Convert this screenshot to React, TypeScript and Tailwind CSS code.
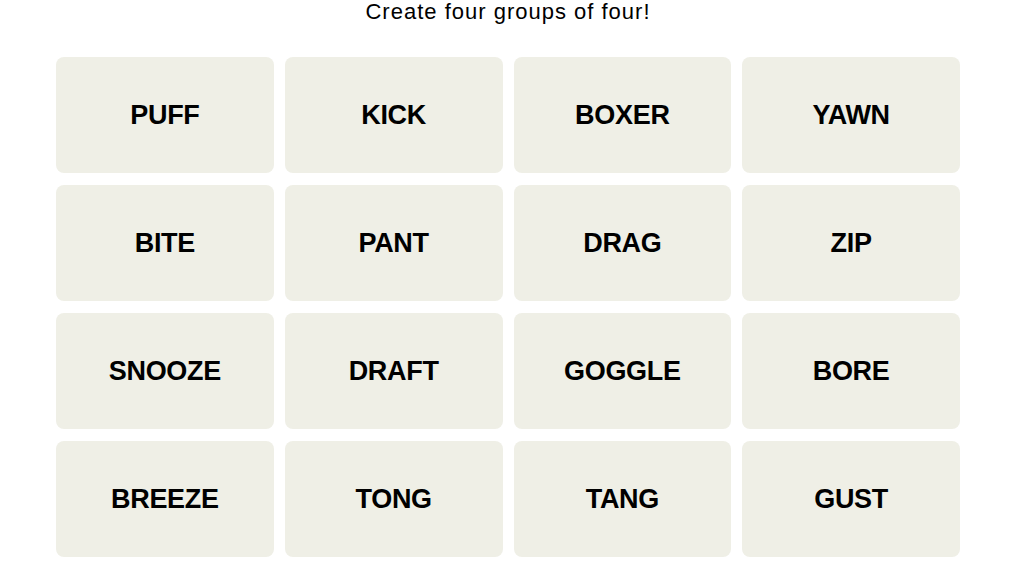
const words = [
  "PUFF", "KICK", "BOXER", "YAWN",
  "BITE", "PANT", "DRAG", "ZIP",
  "SNOOZE", "DRAFT", "GOGGLE", "BORE",
  "BREEZE", "TONG", "TANG", "GUST",
];

export default function App() {
  return (
    <div className="w-[1024px] h-[576px] bg-white overflow-hidden" style={{ fontFamily: '"Liberation Sans", Arial, sans-serif' }}>
      <div className="ml-[56px] w-[904px]">
        <p className="h-[24px] leading-[24px] text-center text-[22px] tracking-[1px] text-black">Create four groups of four!</p>
        <div className="mt-[33px] grid grid-cols-4 gap-x-[11px] gap-y-[12px]">
          {words.map((w) => (
            <button
              key={w}
              className="h-[116px] rounded-lg bg-[#efefe6] flex items-center justify-center text-[27px] font-bold text-black tracking-[-0.3px]"
            >
              {w}
            </button>
          ))}
        </div>
      </div>
    </div>
  );
}
